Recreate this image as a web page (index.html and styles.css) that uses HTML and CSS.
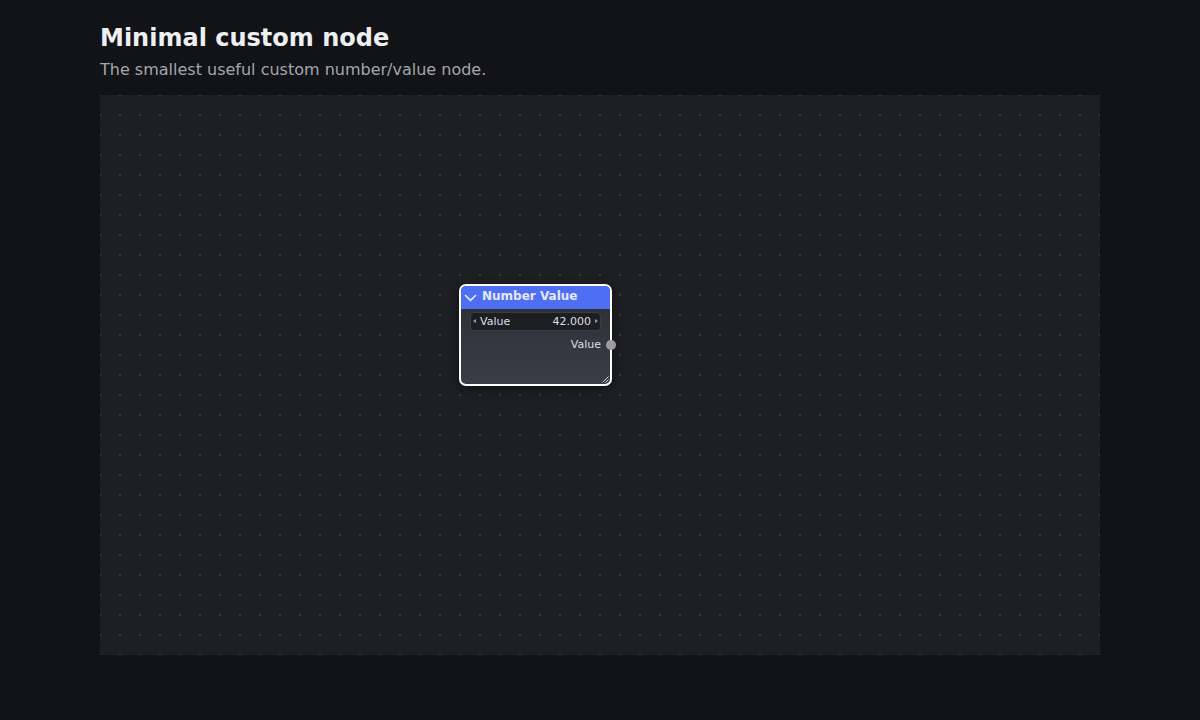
FILE: index.html
```html
<!DOCTYPE html>
<html>
<head>
<meta charset="utf-8">
<link rel="stylesheet" href="styles.css">
</head>
<body>
<div class="page">
  <h1 class="title">Minimal custom node</h1>
  <p class="subtitle">The smallest useful custom number/value node.</p>
  <div class="canvas">
    <div class="node">
      <div class="node-header">
        <svg class="chevron" width="13" height="8" viewBox="0 0 13 8"><path d="M1.5 1.5 L6.5 6.3 L11.5 1.5" fill="none" stroke="#e6eaff" stroke-width="1.7" stroke-linecap="round" stroke-linejoin="round"/></svg>
        <span class="node-title">Number Value</span>
      </div>
      <div class="node-body">
        <div class="field">
          <span class="arrow arrow-left"></span>
          <span class="field-label">Value</span>
          <span class="field-value">42.000</span>
          <span class="arrow arrow-right"></span>
        </div>
        <div class="output">
          <span class="output-label">Value</span>
        </div>
      </div>
      <span class="socket"></span>
      <svg class="resize" width="8" height="8" viewBox="0 0 8 8"><path d="M7.5 1.5 L1.5 7.5 M7.5 4.5 L4.5 7.5" stroke="#cfd2da" stroke-width="1" fill="none"/></svg>
    </div>
  </div>
</div>
</body>
</html>
```
FILE: styles.css
```css
html, body {
  margin: 0;
  padding: 0;
  background: #121317;
  font-family: "DejaVu Sans", sans-serif;
}
.page {
  width: 1000px;
  margin: 0 auto;
  padding-top: 22px;
}
.title {
  margin: 0;
  font-size: 24px;
  font-weight: bold;
  color: #eeeff2;
  line-height: 32px;
}
.subtitle {
  margin: 4px 0 0 0;
  font-size: 16px;
  color: #a2a6ae;
  line-height: 24px;
}
.canvas {
  position: relative;
  margin-top: 13px;
  height: 560px;
  background-color: #1e1f23;
  background-image: radial-gradient(circle at 1px 1px, #36383e 1px, transparent 1.4px);
  background-size: 20px 20px;
  background-position: -1px -1px;
}
.node {
  position: absolute;
  left: 359px;
  top: 189px;
  width: 149px;
  height: 98px;
  border: 2px solid #ffffff;
  border-radius: 7px;
  background: linear-gradient(to bottom, #2c2e34, #3a3d47);
  box-shadow: 0 2px 10px rgba(0,0,0,0.5);
  display: flex;
  flex-direction: column;
}
.node-header {
  height: 20px;
  padding-bottom: 3px;
  background: #4f6ff2;
  border-radius: 5px 5px 0 0;
  display: flex;
  align-items: center;
  padding-left: 3px;
  gap: 5px;
}
.chevron {
  margin-top: 3px;
}
.node-title {
  font-size: 12px;
  font-weight: bold;
  color: #e4e8fb;
}
.node-body {
  padding: 3px 9px 0 9px;
  display: flex;
  flex-direction: column;
}
.field {
  height: 16px;
  background: #1d1e22;
  border: 1px solid #3b3d44;
  border-radius: 4px;
  display: flex;
  align-items: center;
  font-size: 11px;
  color: #dcdee3;
  padding: 0 2px 1px 2px;
  box-sizing: content-box;
}
.arrow {
  width: 0;
  height: 0;
  border-top: 2px solid transparent;
  border-bottom: 2px solid transparent;
}
.arrow-left {
  border-right: 3px solid #9a9ca3;
  margin-right: 4px;
}
.arrow-right {
  border-left: 3px solid #9a9ca3;
  margin-left: 4px;
}
.field-label {
  flex: 1;
}
.output {
  margin-top: 5px;
  height: 16px;
  display: flex;
  justify-content: flex-end;
  align-items: center;
  font-size: 11px;
  color: #dcdee3;
}
.socket {
  position: absolute;
  right: -6px;
  top: 54px;
  width: 10px;
  height: 10px;
  border-radius: 50%;
  background: #9d9d9f;
}
.resize {
  position: absolute;
  right: 1px;
  bottom: 1px;
}
```
